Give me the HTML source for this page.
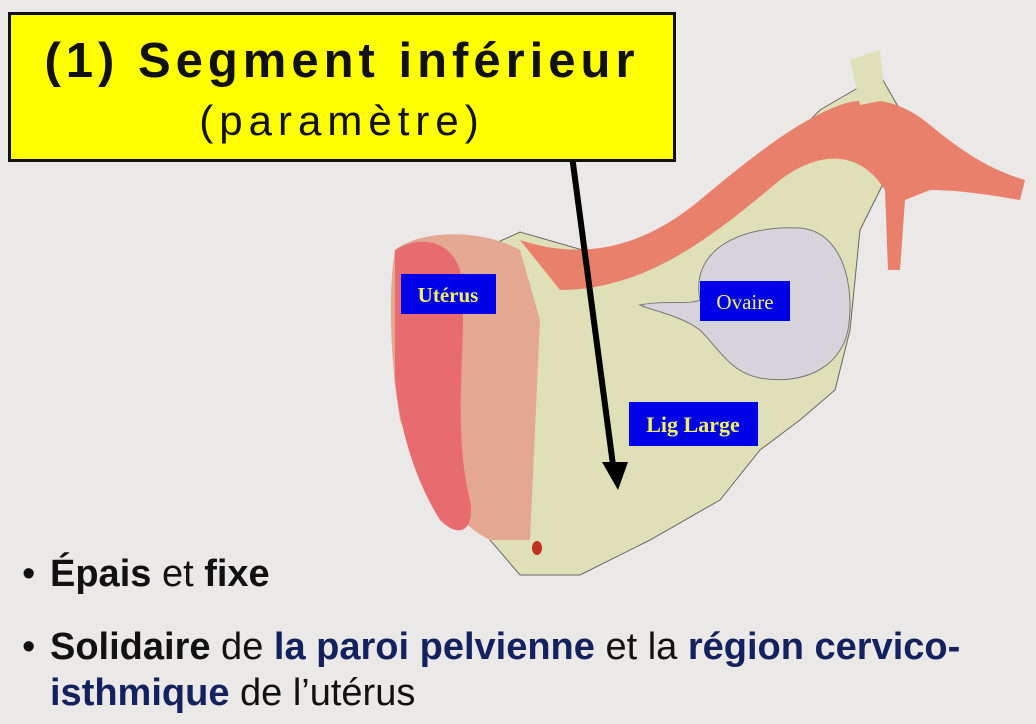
<!DOCTYPE html>
<html><head><meta charset="utf-8"><style>
html,body{margin:0;padding:0}
body{width:1036px;height:724px;background:#ebe8e8;position:relative;overflow:hidden;font-family:"Liberation Sans",sans-serif}
.box{position:absolute;left:8px;top:12px;width:662px;height:144px;background:#ffff00;border:3px solid #111;text-align:center}
.t1{position:absolute;left:0;right:0;top:18px;font-weight:bold;font-size:49px;letter-spacing:5px;color:#111;white-space:nowrap}
.t2{position:absolute;left:0;right:0;top:82px;font-size:42px;letter-spacing:6px;color:#111}
.b{position:absolute;left:22px;font-size:38px;color:#111;white-space:nowrap}
.bl{color:#13215e;font-weight:bold}
.k{font-weight:bold}
.dot{display:inline-block;width:28px}
</style></head><body>
<svg width="1036" height="724" style="position:absolute;left:0;top:0">
<path d="M470 255 L520 232 L600 255 L680 225 L760 170 L820 110 L880 75 L900 110 L890 170 L860 230 L850 330 L835 390 L800 420 L760 450 L720 500 L650 540 L580 575 L520 575 L490 540 L500 420 L470 330 Z" fill="#dfe0b8" stroke="#666" stroke-width="1"/>
<path d="M520 240 C580 260 640 250 700 200 C760 150 800 120 840 105 C870 95 900 100 930 125 C960 150 990 170 1025 180 L1020 200 C990 195 960 190 930 190 L905 200 L900 270 L888 270 L885 190 C860 150 820 150 780 180 C720 230 650 290 560 290 Z" fill="#e9806c"/>
<path d="M850 60 L880 50 L885 100 L860 105 Z" fill="#dfe0b8"/>
<path d="M700 300 C690 250 740 225 800 228 C845 232 855 290 848 330 C840 370 800 385 760 378 C730 372 720 350 700 330 C680 315 650 310 640 305 C665 300 690 305 700 300 Z" fill="#d6d4da" stroke="#777"/>
<path d="M395 250 C420 230 480 228 520 250 L540 320 L530 540 L490 540 C450 520 420 470 400 420 C390 360 388 290 395 250 Z" fill="#e4a792"/>
<path d="M395 250 C420 235 450 240 460 270 C470 330 450 420 470 500 C475 530 460 540 440 520 C415 480 400 430 395 380 Z" fill="#e76b6f"/>
<ellipse cx="537" cy="548" rx="5" ry="7" fill="#c0301e"/>
<rect x="401" y="274" width="95" height="40" fill="#0000e8"/>
<text x="448" y="302" font-family="Liberation Serif,serif" font-weight="bold" font-size="21" fill="#f0f060" text-anchor="middle">Utérus</text>
<rect x="700" y="281" width="90" height="40" fill="#0000e8"/>
<text x="745" y="309" font-family="Liberation Serif,serif" font-size="21" fill="#f0f060" text-anchor="middle">Ovaire</text>
<rect x="629" y="402" width="129" height="44" fill="#0000e8"/>
<text x="693" y="432" font-family="Liberation Serif,serif" font-weight="bold" font-size="22" fill="#f0f060" text-anchor="middle">Lig Large</text>
<line x1="563" y1="88" x2="613" y2="465" stroke="#000" stroke-width="6"/>
<polygon points="602,462 628,462 618,490" fill="#000"/>
</svg>
<div class="box"><div class="t1">(1) Segment inférieur</div><div class="t2">(paramètre)</div></div>
<div class="b" style="top:553px"><span class="dot">•</span><span class="k">Épais</span> et <span class="k">fixe</span></div>
<div class="b" style="top:626px"><span class="dot">•</span><span class="k">Solidaire</span> de <span class="bl">la paroi pelvienne</span> et la <span class="bl">région cervico-</span></div>
<div class="b" style="top:672px;left:50px"><span class="bl">isthmique</span> de l’utérus</div>
</body></html>
